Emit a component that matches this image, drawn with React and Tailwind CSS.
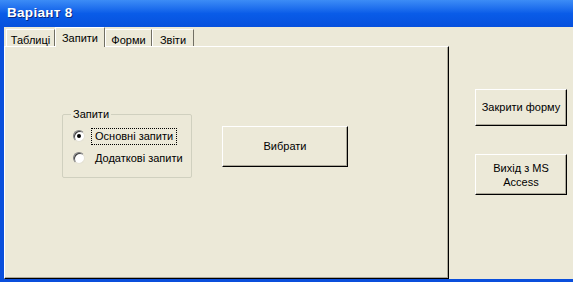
const raised =
  'border border-t-white border-l-white border-r-black border-b-black shadow-[inset_-1px_-1px_0_#aca899]'

function Tab({ label, active, width }) {
  if (active) {
    return (
      <div
        className={`${width} h-[20px] -mb-px z-10 relative flex items-start justify-center pt-[2px] bg-[#ece9d8] border border-b-0 border-t-white border-l-white border-r-[#716f64]`}
      >
        {label}
      </div>
    )
  }
  return (
    <div
      className={`${width} h-[17px] mt-[3px] flex items-start justify-center pt-[2px] bg-[#ece9d8] border border-b-0 border-t-white border-l-white border-r-[#716f64]`}
    >
      {label}
    </div>
  )
}

function Radio({ checked, label, focused }) {
  return (
    <div className="flex items-center h-[22px]">
      <div className="w-[12px] h-[12px] rounded-full bg-white border border-t-[#808080] border-l-[#808080] border-r-[#e4e1d3] border-b-[#e4e1d3] shadow-[inset_1px_1px_0_#404040] flex items-center justify-center">
        {checked && <div className="w-[4px] h-[4px] rounded-full bg-black" />}
      </div>
      <span
        className={`ml-[7px] px-[3px] leading-[15px] ${focused ? 'outline outline-1 outline-dotted outline-black' : 'outline outline-1 outline-transparent'}`}
      >
        {label}
      </span>
    </div>
  )
}

export default function App() {
  const tabs = [
    { label: 'Таблиці', width: 'w-[49px]' },
    { label: 'Запити', width: 'w-[50px]', active: true },
    { label: 'Форми', width: 'w-[47px]' },
    { label: 'Звіти', width: 'w-[42px]' },
  ]

  return (
    <div className="w-[573px] h-[282px] flex flex-col bg-[#0a4fdc] font-['Liberation_Sans',Arial,sans-serif] text-[11px] text-black overflow-hidden">
      <div className="h-[27px] shrink-0 flex items-center pl-[7px] bg-gradient-to-b from-[#3c8cf6] via-[#0a5ce8] to-[#0650dd]">
        <span className="text-white font-bold text-[13.5px] tracking-[0.3px] [text-shadow:1px_1px_0_#0a2a80]">
          Варіант 8
        </span>
      </div>

      <div className="flex-1 flex ml-[4px] mb-[3px] bg-[#ece9d8]">
        <div className="w-[445px] flex flex-col">
          <div className="h-[20px] flex items-end pl-[2px] -mt-px">
            {tabs.map((t) => (
              <Tab key={t.label} {...t} />
            ))}
          </div>
          <div className="flex-1 flex items-start pt-[61px] pl-[57px] bg-[#ece9d8] border border-t-white border-l-white border-r-black border-b-black shadow-[inset_-1px_-1px_0_#aca899]">
            <fieldset className="w-[130px] h-[70px] border border-[#d0d0bf] rounded-[2px] pl-[10px] pt-[4px]">
              <legend className="ml-[-2px] px-[2px] leading-[13px]">Запити</legend>
              <Radio checked focused label="Основні запити" />
              <Radio label="Додаткові запити" />
            </fieldset>
            <button className={`ml-[30px] mt-[18px] w-[126px] h-[41px] bg-[#ece9d8] ${raised}`}>
              Вибрати
            </button>
          </div>
        </div>

        <div className="flex-1 flex flex-col items-start pl-[26px] pt-[62px] gap-[28px]">
          <button className={`w-[92px] h-[37px] bg-[#ece9d8] ${raised}`}>
            Закрити форму
          </button>
          <button className={`w-[92px] h-[41px] bg-[#ece9d8] leading-[14px] ${raised}`}>
            Вихід з MS
            <br />
            Access
          </button>
        </div>
      </div>
    </div>
  )
}
